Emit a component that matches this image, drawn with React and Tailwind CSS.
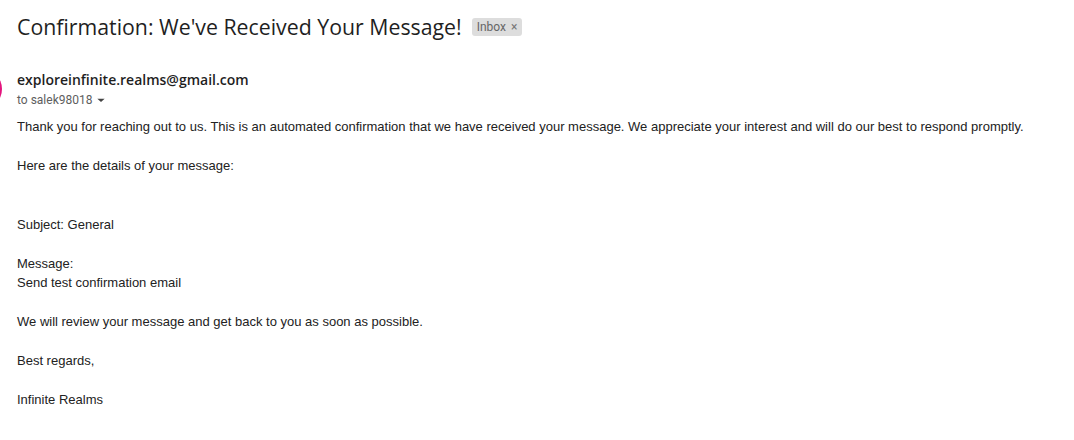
import React from 'react';

const body = [
  'Thank you for reaching out to us. This is an automated confirmation that we have received your message. We appreciate your interest and will do our best to respond promptly.',
  '',
  'Here are the details of your message:',
  '',
  '',
  'Subject: General',
  '',
  'Message:',
  'Send test confirmation email',
  '',
  'We will review your message and get back to you as soon as possible.',
  '',
  'Best regards,',
  '',
  'Infinite Realms',
];

function App() {
  return (
    <div className="w-[1074px] h-[440px] bg-white overflow-hidden relative" style={{ fontFamily: '"Liberation Sans", Arial, sans-serif' }}>
      {/* header */}
      <div className="flex items-center gap-[10px] pl-[17px] pt-[13px]">
        <h1 className="text-[21.3px] leading-[28px] text-[#1f1f1f]" style={{ fontFamily: '"Open Sans", Roboto, sans-serif' }}>
          Confirmation: We've Received Your Message!
        </h1>
        <span className="flex items-center gap-[5px] h-[18px] px-[5px] rounded-[3px] bg-[#dddddd] text-[12px] text-[#666666]" style={{ fontFamily: 'Roboto, sans-serif' }}>
          Inbox <span className="text-[12px] text-[#777]">×</span>
        </span>
      </div>

      {/* sender */}
      <div className="relative mt-[29px]">
        <div className="absolute left-[-38px] top-[-1px] w-[40px] h-[40px] rounded-full bg-[#e3147d]" />
        <div className="pl-[17px]">
          <div className="text-[14px] leading-[20px] font-semibold text-[#1f1f1f]" style={{ fontFamily: '"Open Sans", Roboto, sans-serif' }}>
            exploreinfinite.realms@gmail.com
          </div>
          <div className="flex items-center gap-[1px] text-[12px] leading-[20px] text-[#5e5e5e]" style={{ fontFamily: 'Roboto, sans-serif' }}>
            to salek98018
            <svg width="16" height="16" viewBox="0 0 24 24" className="fill-[#444]"><path d="M6.5 10l5.5 5 5.5-5z" /></svg>
          </div>
        </div>
      </div>

      {/* body */}
      <div className="pl-[17px] pt-[7px] text-[13px] leading-[19.5px] text-[#222222]">
        {body.map((line, i) => (
          <div key={i} className="h-[19.5px] whitespace-nowrap">{line}</div>
        ))}
      </div>
    </div>
  );
}

export default App;
